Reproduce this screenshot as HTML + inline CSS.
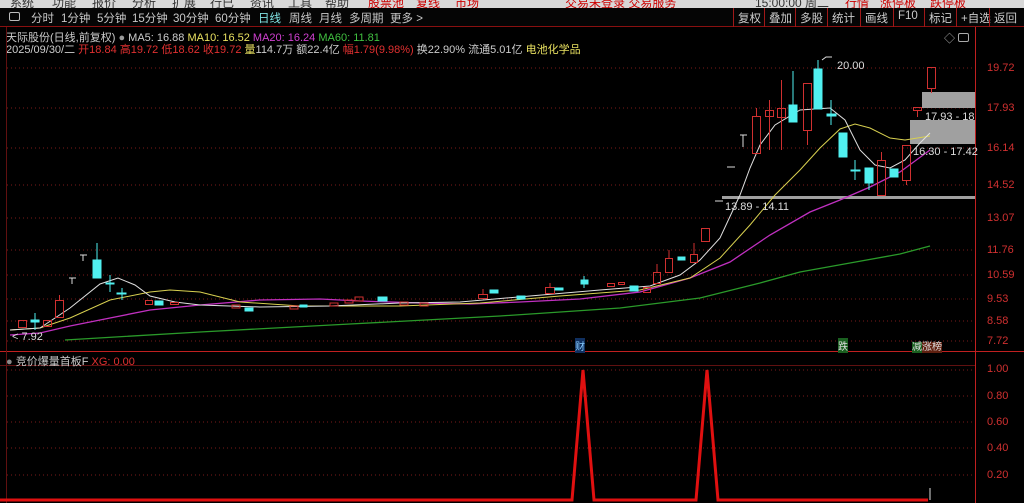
<!DOCTYPE html>
<html><head><meta charset="utf-8"><style>
*{margin:0;padding:0;box-sizing:border-box}
body{width:1024px;height:503px;background:#000;overflow:hidden;position:relative;font-family:"Liberation Sans","Noto Sans CJK SC",sans-serif;font-size:11px;color:#ccc}
.top{position:absolute;left:0;top:0;width:1024px;height:8px;background:#d8d8d8;overflow:hidden}
.top span{position:absolute;top:-6px;font-size:12px;color:#333}
.tb{position:absolute;left:0;top:8px;width:1024px;height:19px;background:#050505;border-bottom:1px solid #8a1010;white-space:nowrap}
.tb span{position:absolute;top:2px;font-size:11.5px;color:#c8c8c8}
.rb{position:absolute;top:8px;height:19px;border-left:1px solid #a01818;font-size:11.5px;color:#ccc;padding:2px 0 0 4px}
.l{position:absolute;white-space:nowrap;font-size:11px}
.ax{position:absolute;left:987px;font-size:11px;color:#d03030}
</style></head><body>
<div class="top"><span style="left:10px">系统</span><span style="left:52px">功能</span><span style="left:92px">报价</span><span style="left:132px">分析</span><span style="left:172px">扩展</span><span style="left:210px">行已</span><span style="left:250px">资讯</span><span style="left:288px">工具</span><span style="left:325px">帮助</span><span style="left:368px;color:#c00">股票池</span><span style="left:416px;color:#c00">复线</span><span style="left:455px;color:#c00">市场</span><span style="left:565px;color:#c00">交易未登录 交易服务</span><span style="left:755px">15:00:00 周二</span><span style="left:845px;color:#c00">行情</span><span style="left:880px;color:#c00">涨停板</span><span style="left:930px;color:#c00">跌停板</span></div>
<div class="tb">
<span style="left:9px;top:4px;width:11px;height:9px;border:1px solid #bbb;border-radius:2px"></span>
<span style="left:31px">分时</span><span style="left:61px">1分钟</span><span style="left:97px">5分钟</span><span style="left:132px">15分钟</span><span style="left:173px">30分钟</span><span style="left:215px">60分钟</span><span style="left:258px;color:#7fe0e0">日线</span><span style="left:289px">周线</span><span style="left:319px">月线</span><span style="left:349px">多周期</span><span style="left:390px">更多 &gt;</span>
</div>
<div class="rb" style="left:733px">复权</div><div class="rb" style="left:764px">叠加</div><div class="rb" style="left:795px">多股</div><div class="rb" style="left:827px">统计</div><div class="rb" style="left:860px">画线</div><div class="rb" style="left:893px">F10</div><div class="rb" style="left:924px">标记</div><div class="rb" style="left:956px">+自选</div><div class="rb" style="left:989px">返回</div>
<div class="l" style="left:6px;top:29px;color:#ccc">天际股份(日线,前复权) <span style="color:#999">●</span> MA5: 16.88 <span style="color:#e8e060">MA10: 16.52</span> <span style="color:#d040d0">MA20: 16.24</span> <span style="color:#40c040">MA60: 11.81</span></div>
<div class="l" style="left:6px;top:41px;color:#ccc">2025/09/30/二 <span style="color:#e03030">开18.84 高19.72 低18.62 收19.72</span> <span style="color:#e8e060">量</span>114.7万 额22.4亿 <span style="color:#e03030">幅1.79(9.98%)</span> 换22.90% 流通5.01亿 <span style="color:#e8e060">电池化学品</span></div>
<svg style="position:absolute;left:0;top:0" width="1024" height="503">
<g stroke="#c02020" fill="none">
<line x1="975.5" y1="27" x2="975.5" y2="503"/>
<line x1="0" y1="351.5" x2="1024" y2="351.5"/>
<line x1="0" y1="365.5" x2="975" y2="365.5" stroke="#601010"/>
<line x1="6.5" y1="27" x2="6.5" y2="503" stroke="#601010"/>
</g>
<g stroke="#7a1a1a" stroke-dasharray="1 3">
<line x1="7" y1="68" x2="975" y2="68"/><line x1="7" y1="108" x2="975" y2="108"/><line x1="7" y1="148" x2="975" y2="148"/><line x1="7" y1="185" x2="975" y2="185"/><line x1="7" y1="218" x2="975" y2="218"/><line x1="7" y1="250" x2="975" y2="250"/><line x1="7" y1="275" x2="975" y2="275"/><line x1="7" y1="299" x2="975" y2="299"/><line x1="7" y1="321" x2="975" y2="321"/><line x1="7" y1="341" x2="975" y2="341"/>
<line x1="7" y1="370" x2="975" y2="370"/><line x1="7" y1="396" x2="975" y2="396"/><line x1="7" y1="422" x2="975" y2="422"/><line x1="7" y1="448" x2="975" y2="448"/><line x1="7" y1="475" x2="975" y2="475"/>
</g>
<g fill="#a0a0a0"><rect x="922" y="92" width="53" height="16"/><rect x="910" y="120" width="65" height="24"/><rect x="722" y="196" width="253" height="3"/></g>
<polyline fill="none" stroke="#2a9a2a" stroke-width="1.3" points="65,340 200,332 350,324 500,316 620,308 700,298 760,283 800,272 850,263 900,254 930,246"/>
<polyline fill="none" stroke="#c030c0" stroke-width="1.3" points="10,335 40,333 70,326 110,318 150,310 200,305 260,300 320,299 360,301 420,303 470,304 520,302 580,299 640,292 690,278 730,262 770,235 810,212 840,200 870,187 900,172 930,150"/>
<polyline fill="none" stroke="#d8d050" stroke-width="1" points="10,330 40,328 70,318 110,300 150,292 170,290 200,292 240,302 300,306 400,306 480,303 560,296 640,290 690,278 720,258 750,225 775,195 800,170 820,148 840,129 855,124 870,128 890,138 905,140 930,136"/>
<polyline fill="none" stroke="#e0e0e0" stroke-width="1" points="10,330 40,328 70,308 100,284 118,278 135,285 150,296 175,302 200,305 260,307 330,306 400,303 460,302 530,296 600,290 650,286 680,275 700,260 720,238 740,195 750,168 760,145 775,125 800,110 830,108 845,120 860,150 875,165 890,168 905,160 920,143 930,133"/>
<g stroke="#d03030" fill="none">
<rect x="18.5" y="320.5" width="8" height="7"/><rect x="43.5" y="320.5" width="8" height="6"/><rect x="55.5" y="300.5" width="8" height="17"/><line x1="59.5" y1="295" x2="59.5" y2="300"/>
<rect x="145.5" y="300.5" width="7" height="4"/><rect x="170.5" y="302.5" width="8" height="2"/><rect x="232" y="305" width="8" height="3"/><rect x="290" y="306" width="8" height="3"/><rect x="330" y="303" width="8" height="3"/><rect x="345" y="300" width="8" height="3"/><rect x="355" y="297" width="8" height="4"/><rect x="400" y="302" width="8" height="3"/><rect x="420" y="303" width="8" height="3"/>
<rect x="478.5" y="294.5" width="9" height="4"/><line x1="483" y1="289" x2="483" y2="294"/><rect x="545.5" y="287.5" width="9" height="6"/><line x1="550" y1="283" x2="550" y2="287"/><rect x="607.5" y="283.5" width="7" height="3"/><rect x="618.5" y="282.5" width="6" height="2"/><rect x="643.5" y="287.5" width="7" height="5"/>
<rect x="653.5" y="272.5" width="7" height="11"/><line x1="657" y1="264" x2="657" y2="272"/><rect x="665.5" y="258.5" width="7" height="14"/><line x1="669" y1="250" x2="669" y2="258"/><rect x="690.5" y="254.5" width="7" height="8"/><line x1="694" y1="243" x2="694" y2="254"/><rect x="701.5" y="228.5" width="8" height="13"/>
<rect x="752.5" y="116.5" width="8" height="37"/><line x1="756.5" y1="108" x2="756.5" y2="116"/><rect x="765.5" y="110.5" width="8" height="6"/><line x1="769.5" y1="100" x2="769.5" y2="150"/><rect x="777.5" y="108.5" width="8" height="9"/><line x1="781.5" y1="80" x2="781.5" y2="150"/><rect x="803.5" y="83.5" width="8" height="47"/><line x1="807.5" y1="130" x2="807.5" y2="145"/>
<rect x="877.5" y="160.5" width="8" height="35"/><line x1="881.5" y1="152" x2="881.5" y2="160"/><rect x="902.5" y="145.5" width="8" height="35"/><line x1="906.5" y1="180" x2="906.5" y2="185"/><rect x="913.5" y="107.5" width="8" height="3"/><line x1="917.5" y1="110" x2="917.5" y2="117"/><rect x="927.5" y="67.5" width="8" height="21"/><line x1="931.5" y1="88" x2="931.5" y2="93"/>
</g>
<g fill="#50f0f0" stroke="#50f0f0">
<line x1="35" y1="313" x2="35" y2="330"/><rect x="31" y="320" width="8" height="2"/>
<rect x="93" y="260" width="8" height="18"/><line x1="97" y1="243" x2="97" y2="260"/>
<line x1="110" y1="275" x2="110" y2="292"/><rect x="106" y="283" width="8" height="1"/>
<line x1="122" y1="288" x2="122" y2="300"/><rect x="117" y="293" width="9" height="1"/>
<rect x="155" y="301" width="8" height="4"/><rect x="245" y="308" width="8" height="3"/><rect x="300" y="305" width="7" height="2"/><rect x="378" y="297" width="9" height="4"/>
<rect x="490" y="290" width="8" height="3"/><rect x="517" y="296" width="8" height="3"/><rect x="555" y="288" width="8" height="2"/><rect x="581" y="280" width="7" height="4"/><line x1="584" y1="276" x2="584" y2="288"/><rect x="630" y="286" width="8" height="5"/><rect x="678" y="257" width="7" height="3"/>
<rect x="789" y="105" width="8" height="17"/><line x1="793" y1="71" x2="793" y2="105"/>
<rect x="814" y="69" width="8" height="40"/><line x1="818" y1="60" x2="818" y2="69"/>
<line x1="831" y1="100" x2="831" y2="125"/><rect x="827" y="114" width="9" height="2"/>
<rect x="839" y="133" width="8" height="24"/>
<line x1="855" y1="160" x2="855" y2="180"/><rect x="851" y="170" width="9" height="1"/>
<rect x="865" y="168" width="8" height="15"/><line x1="869" y1="183" x2="869" y2="190"/>
<rect x="890" y="169" width="8" height="8"/>
</g>
<g stroke="#ddd" fill="none"><path d="M69 278h7M72 278v6M80 255h7M83 255v6M727 167h8M740 135h7M743 135v12M715 201h8"/><path d="M822 60l4 -3h6"/></g>
<polyline fill="none" stroke="#e01010" stroke-width="3" points="0,500 572,500 583,370 594,500 696,500 707,370 718,500 928,500"/>
<line x1="930" y1="488" x2="930" y2="500" stroke="#ddd"/>
</svg>
<div class="l" style="left:837px;top:60px;color:#ddd">20.00</div>
<div class="l" style="left:925px;top:111px;color:#ddd">17.93 - 18</div>
<div class="l" style="left:913px;top:146px;color:#ddd">16.30 - 17.42</div>
<div class="l" style="left:725px;top:201px;color:#ddd">13.89 - 14.11</div>
<div class="l" style="left:12px;top:331px;color:#ddd">&lt; 7.92</div>
<div class="l" style="left:575px;top:338px;background:#103060;color:#8cf;font-size:10px">财</div>
<div class="l" style="left:838px;top:338px;background:#1a6020;color:#ddd;font-size:10px">跌</div>
<div class="l" style="left:912px;top:338px;font-size:10px"><span style="background:#1a6020;color:#ddd">减</span><span style="background:#602010;color:#ddd">涨榜</span></div>
<div class="l" style="left:944px;top:30px;color:#aaa">◇ <span style="display:inline-block;width:11px;height:9px;border:1px solid #aaa;border-radius:2px"></span></div>
<div class="l" style="left:6px;top:353px;color:#ccc"><span style="color:#888">●</span> 竞价爆量首板F <span style="color:#e03030">XG: 0.00</span></div>
<div class="ax" style="top:62px">19.72</div><div class="ax" style="top:102px">17.93</div><div class="ax" style="top:142px">16.14</div><div class="ax" style="top:179px">14.52</div><div class="ax" style="top:212px">13.07</div><div class="ax" style="top:244px">11.76</div><div class="ax" style="top:269px">10.59</div><div class="ax" style="top:293px">9.53</div><div class="ax" style="top:315px">8.58</div><div class="ax" style="top:335px">7.72</div>
<div class="ax" style="top:363px">1.00</div><div class="ax" style="top:390px">0.80</div><div class="ax" style="top:416px">0.60</div><div class="ax" style="top:442px">0.40</div><div class="ax" style="top:469px">0.20</div>
</body></html>
